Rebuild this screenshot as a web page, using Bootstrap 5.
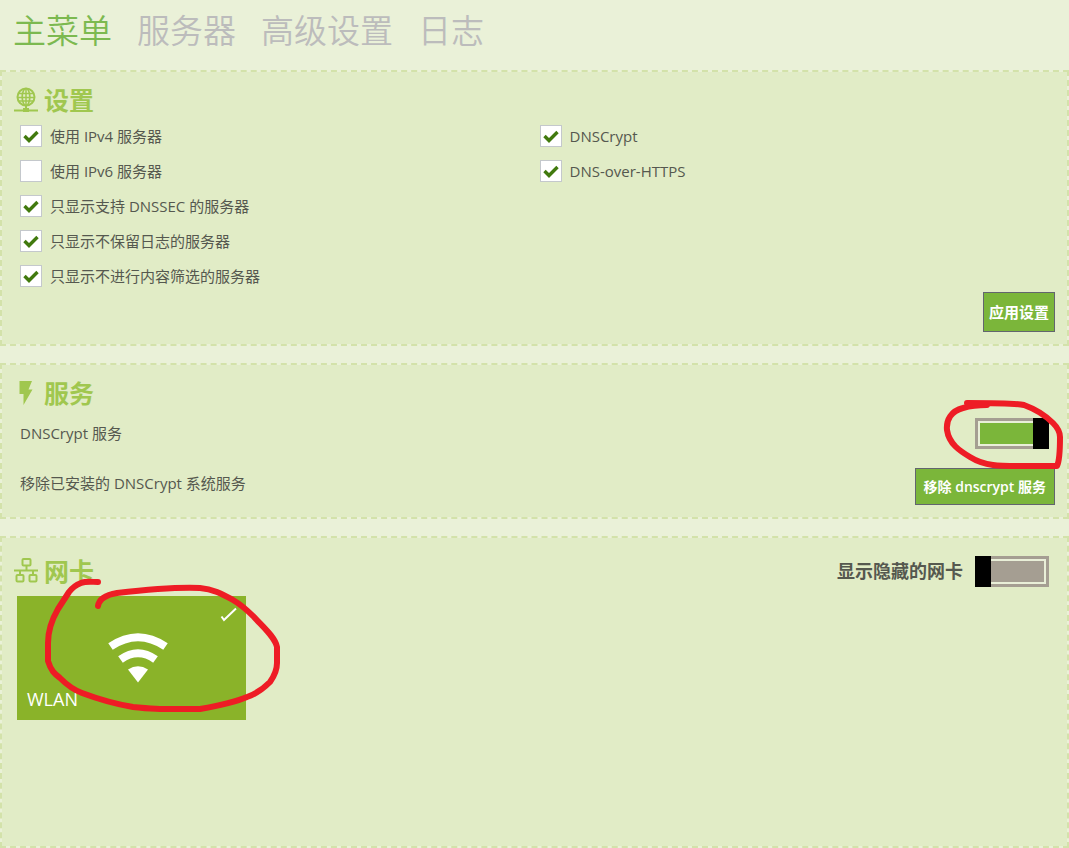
<!DOCTYPE html>
<html lang="zh-CN">
<head>
<meta charset="utf-8">
<meta name="viewport" content="width=device-width, initial-scale=1">
<title>Simple DNSCrypt</title>
<link href="https://cdn.jsdelivr.net/npm/bootstrap@5.3.0/dist/css/bootstrap.min.css" rel="stylesheet">
<style>
  body {
    background: #eaf1d8;
    color: #55584f;
    font-family: "Open Sans", "Noto Sans CJK SC", sans-serif;
    font-size: 15px;
    line-height: 22px;
  }
  .main-tabs { padding: 4px 13px 16px; gap: 25px; }
  .main-tabs .nav-link {
    padding: 0;
    font-family: "Noto Sans CJK SC", sans-serif;
    font-size: 33px;
    font-weight: 350;
    line-height: 50px;
    color: #bcbcbc;
  }
  .main-tabs .nav-link.active { color: #7cb950; }
  .panel {
    background: #e1ecc6;
    border: 2px dashed #d3e2aa;
    background-clip: padding-box;
    padding: 11px 12px 12px;
  }
  .panels { gap: 17px; }
  .panel-tall { padding-top: 18px; }
  .panel-title {
    font-family: "Noto Sans CJK SC", sans-serif;
    font-size: 25px;
    font-weight: 700;
    line-height: 32px;
    color: #a0c74f;
    gap: 6px;
    margin: 0;
  }
  .panel-tall .panel-title { line-height: 28px; align-self: flex-start; }
  .panel-title svg { width: 24px; height: 26px; }
  .options { margin: 10px -4px 5px 6px; }
  .option-list { display: grid; gap: 13px; align-content: start; }
  .option { display: flex; gap: 8px; align-items: center; margin: 0; padding: 0; min-height: 22px; }
  .option .form-check-input {
    float: none;
    width: 22px;
    height: 22px;
    margin: 0;
    border: 1px solid #c4c8cc;
    border-radius: 0;
    background-color: #fff;
  }
  .option .form-check-input:checked {
    background-image: url("data:image/svg+xml,%3Csvg xmlns='http://www.w3.org/2000/svg' viewBox='0 0 20 20'%3E%3Cpath d='M3.5 10 8 14.500 16.500 6' fill='none' stroke='%23417a0e' stroke-width='3.400'/%3E%3C/svg%3E");
    background-size: 20px 20px;
  }
  .act {
    border: 1px solid #62656e;
    border-radius: 0;
    background: #7bb63a;
    color: #fff;
    font-size: 14px;
    font-weight: 600;
    line-height: 23px;
    padding: 6px 8px;
  }
  .act-tall { font-size: 15px; line-height: 24px; padding: 7px 5px; }
  .act:hover { background: #6fa634; color: #fff; }
  .service-row { margin: 10px 0 0 6px; line-height: 31px; }
  .service-row + .service-row { margin-top: 19px; }
  .toggle {
    appearance: none;
    width: 74px;
    height: 31px;
    margin: 0 6px 0 0;
    border: 0;
    padding: 5px;
    background:
      linear-gradient(#000, #000) left / 16px 100% no-repeat border-box,
      linear-gradient(#a59e92, #a59e92) content-box,
      linear-gradient(#e9efd8, #e9efd8) center / calc(100% - 6px) calc(100% - 6px) no-repeat border-box,
      #a59e92;
  }
  .toggle:checked {
    background:
      linear-gradient(#000, #000) right / 16px 100% no-repeat border-box,
      linear-gradient(#7bb63a, #7bb63a) content-box,
      linear-gradient(#e9efd8, #e9efd8) center / calc(100% - 6px) calc(100% - 6px) no-repeat border-box,
      #a59e92;
  }
  .toggle-label { font-size: 18px; font-weight: 600; line-height: 31px; }
  .tile {
    width: 229px;
    height: 124px;
    margin: 9px 0 0 3px;
    border: 0;
    padding: 0 10px 9px;
    background: #8ab329;
    color: #fff;
    font-size: 18px;
    line-height: 24px;
  }
  .tile-icon { width: 60px; height: 50px; left: 91px; top: 37px; }
  .tile-tick { width: 18px; height: 16px; right: 8px; top: 10px; }
  .pen { position: absolute; fill: none; stroke: #ee1c25; stroke-width: 6; stroke-linecap: round; stroke-linejoin: round; pointer-events: none; }
  .pen-service { width: 127px; height: 76px; right: 0; top: 31px; }
  .pen-card { width: 240px; height: 140px; left: 40px; top: 37px; }
</style>
</head>
<body>
<div class="d-flex flex-column min-vh-100">
  <nav class="nav main-tabs">
    <a class="nav-link active" href="#main" aria-current="page">主菜单</a>
    <a class="nav-link" href="#servers">服务器</a>
    <a class="nav-link" href="#advanced">高级设置</a>
    <a class="nav-link" href="#log">日志</a>
  </nav>

  <main class="panels d-flex flex-column flex-grow-1" id="main">
    <section class="panel">
      <h2 class="panel-title d-flex align-items-center">
        <svg viewBox="0 0 24 26" fill="none" stroke="currentColor" stroke-width="2" aria-hidden="true">
          <circle cx="12" cy="11" r="8.500"/><ellipse cx="12" cy="11" rx="3.800" ry="8.500" stroke-width="1.700"/>
          <path d="M12 2.500v17M4.500 7.500h15M3.500 11.500h17M4.500 15h15" stroke-width="1.500"/>
          <path d="M12 20v3M0 24.500h24"/><path d="M9 24h6" stroke-width="4"/>
        </svg>
        设置
      </h2>
      <div class="options row g-0">
        <div class="col-6 option-list">
          <div class="form-check option"><input class="form-check-input" type="checkbox" id="ipv4" checked><label for="ipv4">使用 IPv4 服务器</label></div>
          <div class="form-check option"><input class="form-check-input" type="checkbox" id="ipv6"><label for="ipv6">使用 IPv6 服务器</label></div>
          <div class="form-check option"><input class="form-check-input" type="checkbox" id="dnssec" checked><label for="dnssec">只显示支持 DNSSEC 的服务器</label></div>
          <div class="form-check option"><input class="form-check-input" type="checkbox" id="nolog" checked><label for="nolog">只显示不保留日志的服务器</label></div>
          <div class="form-check option"><input class="form-check-input" type="checkbox" id="nofilter" checked><label for="nofilter">只显示不进行内容筛选的服务器</label></div>
        </div>
        <div class="col-6 option-list">
          <div class="form-check option"><input class="form-check-input" type="checkbox" id="dnscrypt" checked><label for="dnscrypt">DNSCrypt</label></div>
          <div class="form-check option"><input class="form-check-input" type="checkbox" id="doh" checked><label for="doh">DNS-over-HTTPS</label></div>
        </div>
      </div>
      <div class="d-flex justify-content-end">
        <button type="button" class="btn act act-tall">应用设置</button>
      </div>
    </section>

    <section class="panel position-relative">
      <h2 class="panel-title d-flex align-items-center">
        <svg viewBox="0 0 24 26" fill="currentColor" aria-hidden="true"><path d="M5.500 2H18L14.500 10.500H18.500L9.500 26V15H5.500Z"/></svg>
        服务
      </h2>
      <div class="service-row d-flex justify-content-between align-items-start">
        <label for="service">DNSCrypt 服务</label>
        <input class="toggle" type="checkbox" role="switch" id="service" checked>
      </div>
      <div class="service-row d-flex justify-content-between align-items-start">
        <span>移除已安装的 DNSCrypt 系统服务</span>
        <button type="button" class="btn act">移除 dnscrypt 服务</button>
      </div>
      <svg class="pen pen-service" viewBox="940 396 127 76" aria-hidden="true">
        <path d="M987 405C978 405 970 406 963 408C951 411 946 420 947 430C949 444 960 451 970 457C978 462 985 464 993 465C1000 466 1010 466 1020 466L1057 466C1060 460 1060 448 1060 437C1060 432 1056 426 1053 423C1045 415 1035 409 1024 405C1015 403 1000 403 967 403Z"/>
      </svg>
    </section>

    <section class="panel panel-tall position-relative flex-grow-1">
      <div class="d-flex justify-content-between">
        <h2 class="panel-title d-flex align-items-center">
          <svg viewBox="0 0 24 26" fill="none" stroke="currentColor" stroke-width="2" aria-hidden="true">
            <rect x="8.500" y="2" width="8" height="6.500" rx="1"/><rect x="2.500" y="18" width="7" height="6.500" rx="1"/><rect x="15.500" y="18" width="7" height="6.500" rx="1"/>
            <path d="M12.500 8.500V13.500M0 13.500H24.500M6 13.500V18M19 13.500V18"/>
          </svg>
          网卡
        </h2>
        <div class="d-flex gap-2 align-items-start">
          <label class="toggle-label me-1" for="hidden-cards">显示隐藏的网卡</label>
          <input class="toggle" type="checkbox" role="switch" id="hidden-cards">
        </div>
      </div>
      <button type="button" class="tile position-relative d-flex align-items-end">
        <svg class="tile-icon position-absolute" viewBox="0 0 60 50" aria-hidden="true">
          <g fill="none" stroke="#fff" stroke-width="8"><path d="M2.500 13.500Q30 -5 57.500 13.500"/><path d="M12.500 26.500Q30 14 47.500 26.500"/></g>
          <path d="M20 36.500Q30 30 40 36.500L30 49.500Z" fill="#fff"/>
        </svg>
        <svg class="tile-tick position-absolute" viewBox="0 0 18 16" fill="none" stroke="#fff" stroke-width="2" aria-hidden="true"><path d="M1.500 10.500 4 14 16 2.500"/></svg>
        WLAN
      </button>
      <svg class="pen pen-card" viewBox="42 575 240 140" aria-hidden="true">
        <path d="M98 582C92 582 86 581 81 583C76 585 72 588 69 592L58 609C51 621 48 633 48 643V661C51 671 55 674 60 678C67 685 74 690 82 693C98 699 115 704 133 707C143 708 150 709 160 709H200C217 706 233 703 247 697C256 694 264 688 270 682C275 675 277 670 277 663V647C275 637 263 627 254 617C247 610 240 604 233 600C222 594 213 589 200 588C177 587 143 590 117 593C105 595 99 600 98 606"/>
      </svg>
    </section>
  </main>
</div>
<script src="https://cdn.jsdelivr.net/npm/bootstrap@5.3.0/dist/js/bootstrap.bundle.min.js"></script>
</body>
</html>
